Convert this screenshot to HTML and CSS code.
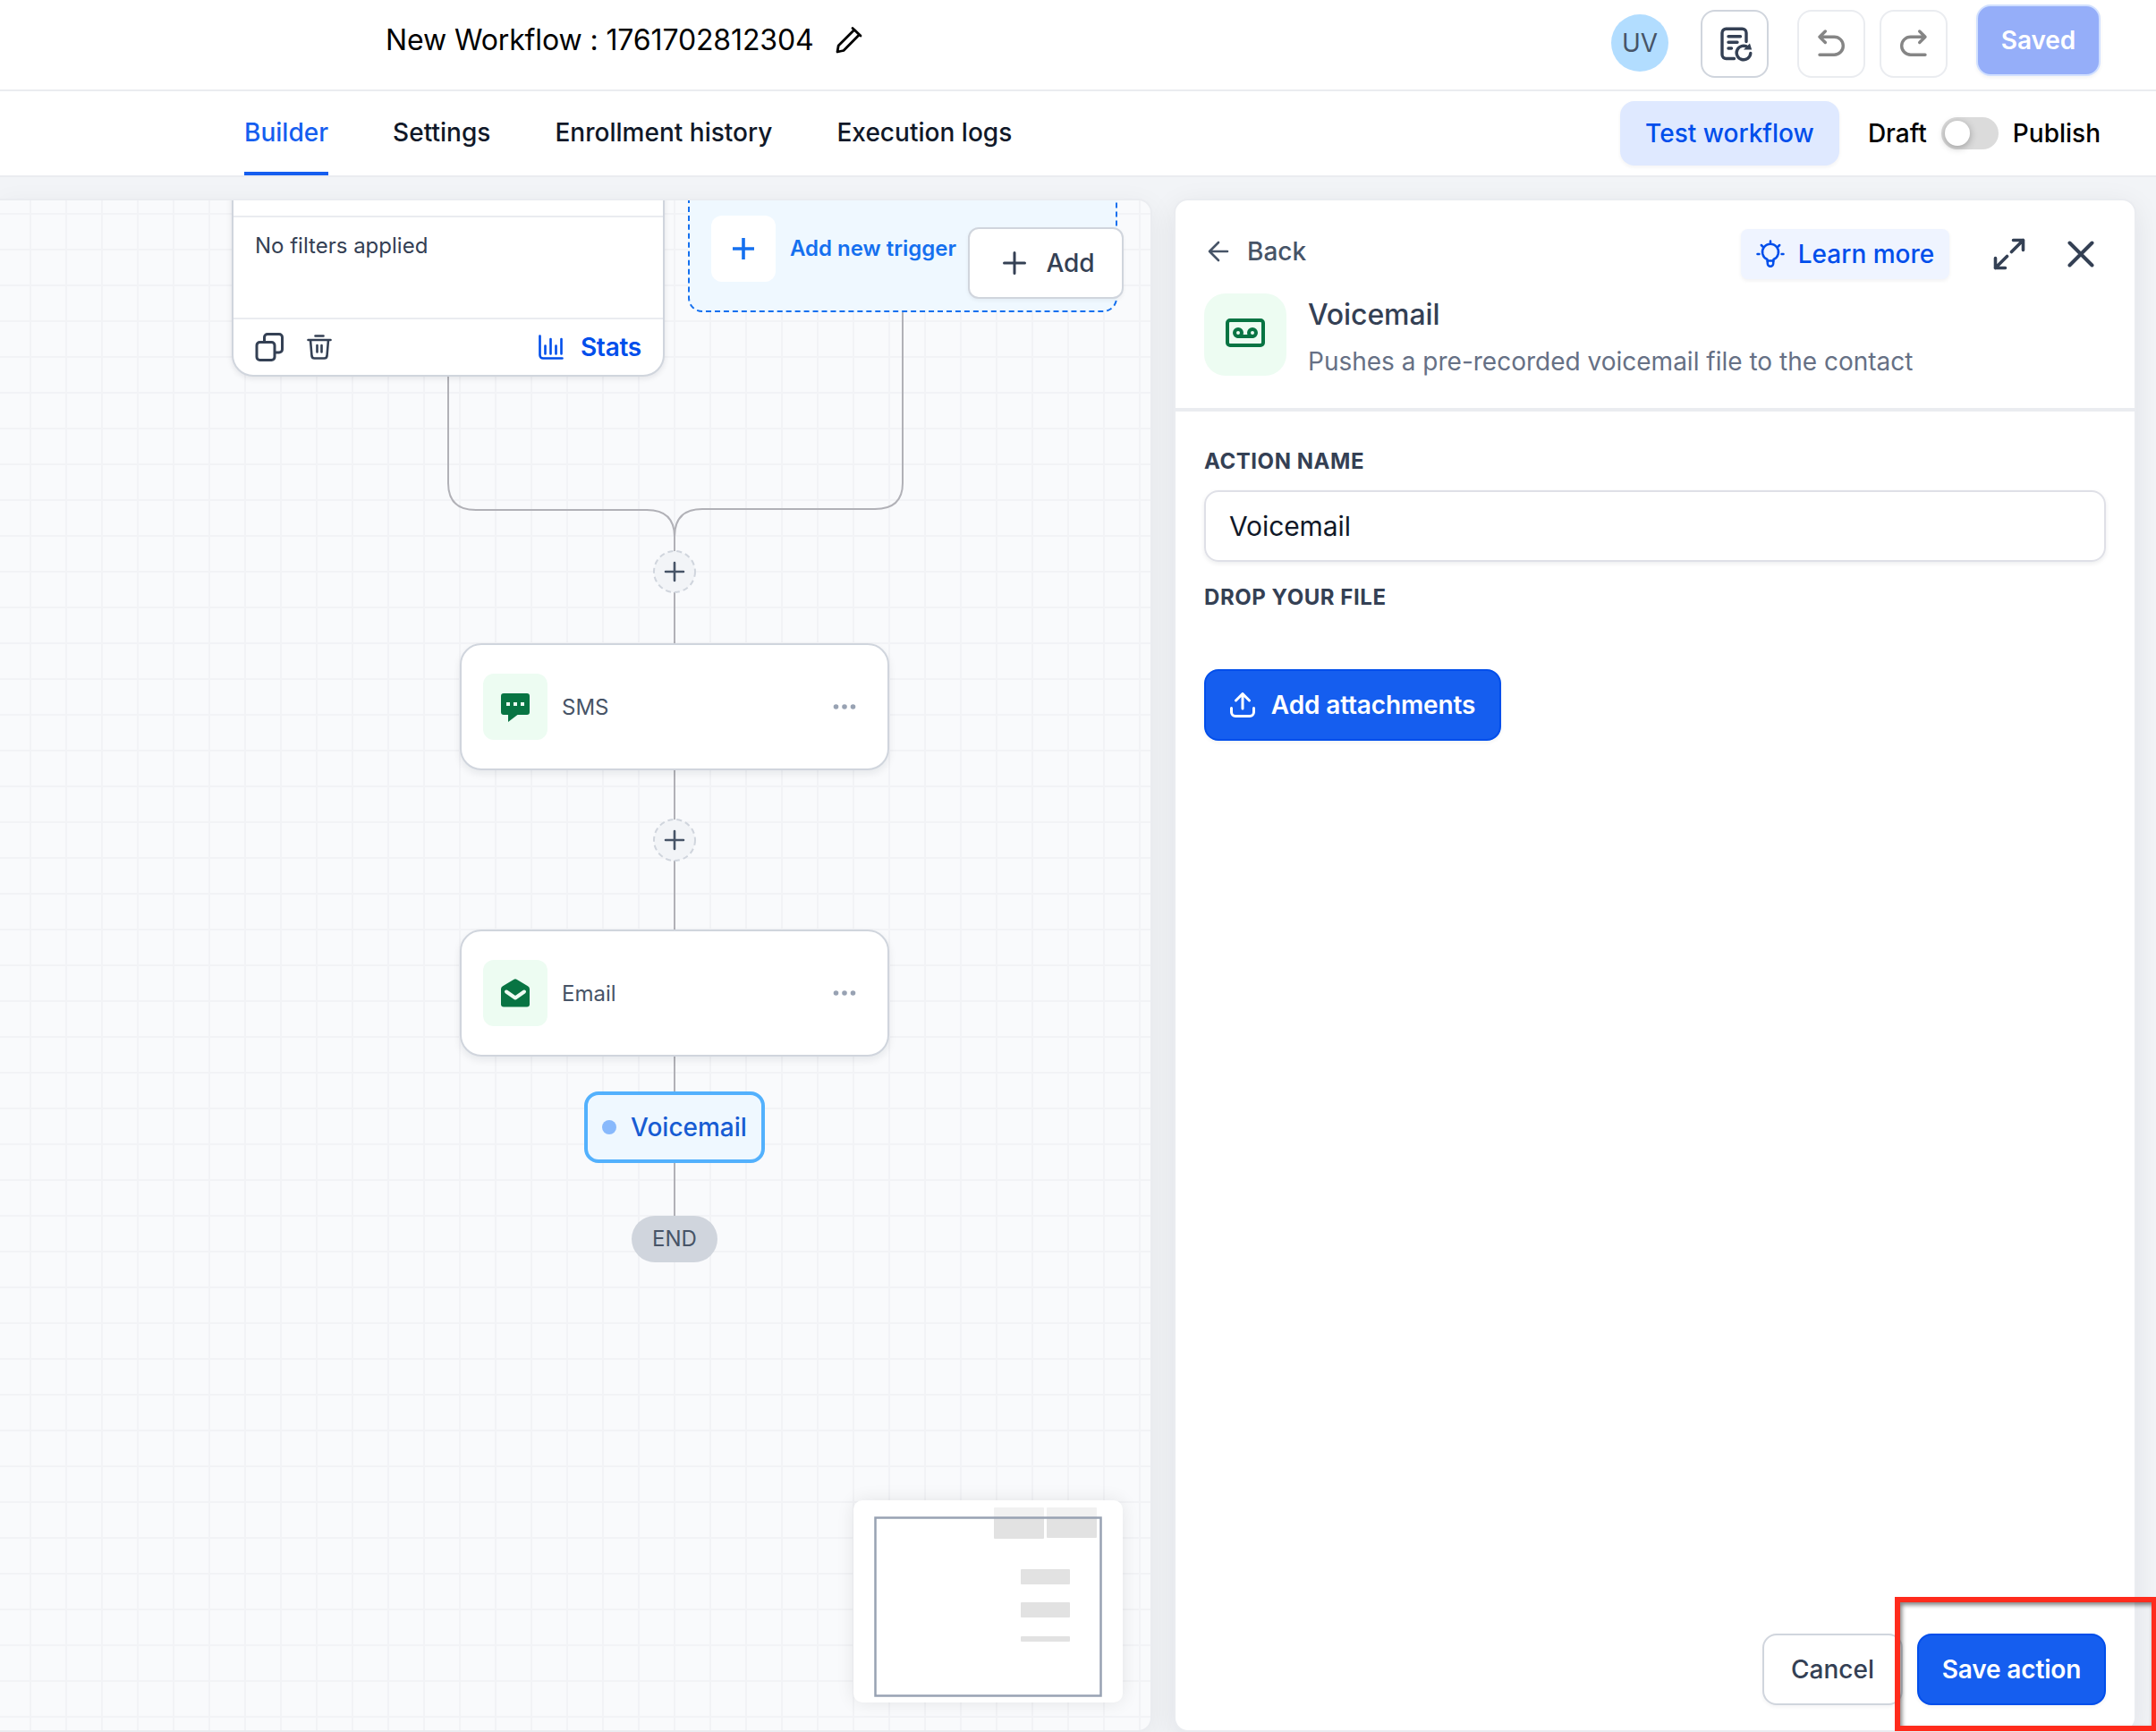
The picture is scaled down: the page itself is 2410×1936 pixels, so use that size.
FILE: index.html
```html
<!DOCTYPE html>
<html lang="en">
<head>
<meta charset="utf-8">
<title>Workflow builder</title>
<link rel="stylesheet" href="styles.css">
</head>
<body>
<header class="topbar">
  <div class="title">New Workflow : 1761702812304</div>
  <svg class="pencil" width="32" height="32" viewBox="0 0 32 32"><path d="M3 29l1.200-7L22 4.300l5.500 5.500L10 27.500zM20 2.500l9 8.500" /></svg>
  <div class="top-actions">
    <div class="avatar">UV</div>
    <button class="icon-btn strong"><svg width="40" height="42" viewBox="0 0 40 42"><path d="M19.500 37.500H10.500A4.500 4.500 0 0 1 6 33V8.700a4.500 4.500 0 0 1 4.500-4.500h18A4.500 4.500 0 0 1 33 8.700V18.500M13 12.700h13.500M13 19.300h10M13 26h3.500M37.800 31.500A7.800 7.800 0 1 1 35 25"/><path class="head" d="M37 20.500l2.200 7H30z"/></svg></button>
    <button class="icon-btn undo"><svg width="32" height="34" viewBox="0 0 32 34"><path d="M9.300 4L3 10.200l6.300 6.300M3 10.200H19.300a10 10 0 0 1 0 20H3"/></svg></button>
    <button class="icon-btn redo"><svg width="32" height="34" viewBox="0 0 32 34"><path d="M22.700 4L29 10.200l-6.300 6.300M29 10.200H12.700a10 10 0 0 0 0 20H29"/></svg></button>
    <button class="saved">Saved</button>
  </div>
</header>
<nav class="tabbar">
  <div class="tabs">
    <a class="tab active">Builder</a><a class="tab">Settings</a><a class="tab">Enrollment history</a><a class="tab">Execution logs</a>
  </div>
  <div class="publish">
    <button class="test">Test workflow</button>
    <span class="draft">Draft</span>
    <span class="toggle"><i></i></span>
    <span>Publish</span>
  </div>
</nav>
<main class="workspace">
  <section class="canvas">
    <svg class="edges" width="1286" height="1710" viewBox="0 224 1286 1710">
      <path d="M501 421V540Q501 570 532 570H723Q754 570 754 600M1009 349V540Q1009 569 978 569H785Q754 569 754 600M754 598V1360"/>
    </svg>

    <article class="trigger">
      <div class="filters">No filters applied</div>
      <footer class="trigger-foot">
        <svg width="32" height="32" viewBox="0 0 32 32"><rect x="2" y="10.500" width="20" height="20" rx="3.500"/><path d="M10.500 10V5a3.500 3.500 0 0 1 3.500-3.500h13A3.500 3.500 0 0 1 30.500 5v13.500A3.500 3.500 0 0 1 27 22h-4.500"/></svg>
        <svg class="trash" width="28" height="28" viewBox="0 0 28 28"><path d="M1.500 6h25M9.500 1.500h9M4 6l1.500 18a3 3 0 0 0 3 2.500h11a3 3 0 0 0 3-2.500L24 6M11.500 12v7.500M16.500 12v7.500"/></svg>
        <svg class="chart" width="28" height="28" viewBox="0 0 28 28"><path d="M1.500 1.500V23a3.500 3.500 0 0 0 3.500 3.500h21.500M7.500 12.500v9M13.500 5v16.500M19.500 12.500v9M25.500 5v16.500"/></svg>
        <span>Stats</span>
      </footer>
    </article>

    <article class="new-trigger">
      <span class="plus-tile"><svg width="24" height="24" viewBox="0 0 24 24"><path d="M12 0v24M0 12h24"/></svg></span>
      <span>Add new trigger</span>
    </article>
    <button class="add-btn"><svg width="26" height="26" viewBox="0 0 26 26"><path d="M13 1.500v23M1.500 13h23"/></svg>Add</button>

    <span class="step-plus p1"><svg width="48" height="48" viewBox="0 0 48 48"><circle cx="24" cy="24" r="23"/><path d="M24 14v20M14 24h20"/></svg></span>
    <article class="node sms">
      <span class="tile"><svg width="32" height="32" viewBox="0 0 32 32"><path fill-rule="evenodd" d="M3 0h26a3 3 0 0 1 3 3v18a3 3 0 0 1-3 3H18.500L8 32v-8H3a3 3 0 0 1-3-3V3a3 3 0 0 1 3-3zM6 10v4h4v-4zM14 10v4h4v-4zM22 10v4h4v-4z"/></svg></span>
      <span class="label">SMS</span>
      <svg class="dots" width="26" height="8" viewBox="0 0 26 8"><circle cx="3.500" cy="4" r="2.800"/><circle cx="13" cy="4" r="2.800"/><circle cx="22.500" cy="4" r="2.800"/></svg>
    </article>
    <span class="step-plus p2"><svg width="48" height="48" viewBox="0 0 48 48"><circle cx="24" cy="24" r="23"/><path d="M24 14v20M14 24h20"/></svg></span>
    <article class="node email">
      <span class="tile"><svg width="32" height="32" viewBox="0 0 32 32"><path d="M14.500.8a3 3 0 0 1 3 0L30 8.200A4 4 0 0 1 32 11.500V28.500a3 3 0 0 1-3 3H3a3 3 0 0 1-3-3V11.500A4 4 0 0 1 2 8.200z"/><path class="flap" d="M6 14.500l10 7 10-7"/></svg></span>
      <span class="label">Email</span>
      <svg class="dots" width="26" height="8" viewBox="0 0 26 8"><circle cx="3.500" cy="4" r="2.800"/><circle cx="13" cy="4" r="2.800"/><circle cx="22.500" cy="4" r="2.800"/></svg>
    </article>
    <div class="chip"><i></i>Voicemail</div>
    <div class="end">END</div>

    <aside class="minimap">
      <svg width="301" height="226" viewBox="954 1677 301 226">
        <g fill="#e2e2e2"><rect x="1111" y="1685" width="56" height="35" rx="1"/><rect x="1170" y="1685" width="56" height="34" rx="1"/><rect x="1141" y="1754" width="55" height="17" rx="1"/><rect x="1141" y="1791" width="55" height="17" rx="1"/><rect x="1141" y="1829" width="55" height="6" rx="1"/></g>
        <rect x="1100" y="1680" width="130" height="16" fill="#fff" opacity=".5"/>
        <rect x="978.500" y="1696.500" width="252" height="199" fill="none" stroke="#98a2b3" stroke-width="2.500"/>
      </svg>
    </aside>
  </section>

  <section class="panel">
    <header class="panel-head">
      <div class="panel-nav">
        <a class="back"><svg width="24" height="24" viewBox="0 0 24 24"><path d="M22 12H2M12 2L2 12l10 10"/></svg>Back</a>
        <div class="panel-tools">
          <button class="learn"><svg width="32" height="32" viewBox="0 0 32 32"><path d="M12.500 24.500v-2.500a9 9 0 1 1 7 0v2.500M12.500 23.500h7M12.800 24v2.500a3.200 3.200 0 0 0 6.400 0V24M16 1.500v2M5.800 6l1.500 1.500M26.200 6l-1.500 1.500M1.500 16h2M28.500 16h2"/></svg>Learn more</button>
          <svg class="expand" width="36" height="36" viewBox="0 0 36 36"><path d="M20.500 15.500L33.500 2.500M22.500 2.500h11v11M15.500 20.500L2.500 33.500M2.500 22.500v11h11"/></svg>
          <svg class="close" width="30" height="30" viewBox="0 0 30 30"><path d="M2.500 2.500l25 25M27.500 2.500l-25 25"/></svg>
        </div>
      </div>
      <div class="action-info">
        <span class="action-tile"><svg width="44" height="32" viewBox="0 0 44 32"><rect x="2" y="2" width="40" height="28" rx="3"/><circle cx="14" cy="16" r="4"/><circle cx="30" cy="16" r="4"/><path d="M14 20h16"/></svg></span>
        <div><h1>Voicemail</h1><p>Pushes a pre-recorded voicemail file to the contact</p></div>
      </div>
    </header>
    <form class="form">
      <label>ACTION NAME</label>
      <div class="input">Voicemail</div>
      <label>DROP YOUR FILE</label>
      <button class="primary attach"><svg width="28" height="28" viewBox="0 0 28 28"><path d="M1.500 17.500V22a4.500 4.500 0 0 0 4.500 4.500h16a4.500 4.500 0 0 0 4.500-4.500v-4.500M14 18V1.500M6.500 9L14 1.500 21.500 9"/></svg>Add attachments</button>
    </form>
    <footer class="panel-foot"><button class="cancel">Cancel</button><button class="primary save">Save action</button></footer>
  </section>
</main>
<div class="highlight"></div>
</body>
</html>
```
FILE: styles.css
```css
* { box-sizing: border-box; }
html, body { margin: 0; width: 2410px; height: 1936px; overflow: hidden; }
body { position: relative; display: flex; flex-direction: column; background: #f2f4f7; font-family: Inter, "Liberation Sans", sans-serif; font-size: 28px; color: #000; }
button { font: inherit; margin: 0; padding: 0; display: flex; align-items: center; justify-content: center; white-space: nowrap; }
svg { display: block; flex: none; fill: none; stroke: currentColor; stroke-width: 3; stroke-linecap: round; stroke-linejoin: round; }

/* Top bar */
.topbar { flex: none; height: 102px; background: #fff; border-bottom: 2px solid #eaecf0; display: flex; align-items: flex-start; padding-left: 431px; padding-right: 62px; }
.title { font-size: 32px; line-height: 40px; margin-top: 25px; white-space: nowrap; width: 478px; letter-spacing: -.12px; }
.pencil { margin: 29px 0 0 24px; stroke-width: 2.800; }
.top-actions { display: flex; align-items: flex-start; margin-left: auto; }
.avatar { width: 64px; height: 64px; margin: 16px 36px 0 0; border-radius: 50%; background: #b2ddff; color: #475467; line-height: 64px; text-align: center; }
.icon-btn { width: 76px; height: 76px; margin-top: 11px; background: #fff; border: 2px solid #eaecf0; border-radius: 16px; color: #858585; }
.icon-btn svg { stroke-width: 3.400; }
.icon-btn.strong { border-color: #d0d5dd; color: #344054; margin-right: 32px; }
.icon-btn .head { fill: currentColor; stroke: none; }
.undo { margin-right: 16px; }
.redo { margin-right: 32px; }
.undo svg, .redo svg { margin-top: -3px; }
.saved { width: 139px; height: 80px; margin-top: 5px; border: 2px solid #d1e0ff; border-radius: 16px; background: #95aef9; color: #fff; font-weight: 600; letter-spacing: -.1px; box-shadow: 0 2px 4px rgba(16,24,40,.05); }

/* Tabs */
.tabbar { flex: none; height: 96px; background: #fff; border-bottom: 2px solid #eaecf0; display: flex; justify-content: space-between; padding: 0 62px 0 273px; font-weight: 500; }
.tabs { display: flex; gap: 72px; }
.tab { height: 94px; padding-top: 1px; line-height: 90px; border-bottom: 4px solid transparent; color: #101828; white-space: nowrap; letter-spacing: .02px; }
.tab.active { color: #155eef; border-image: linear-gradient(#155eef, #155eef) 1; }
.publish { display: flex; align-items: center; }
.test { width: 245px; height: 72px; margin-right: 32px; border: 0; border-radius: 16px; background: #dfe9ff; color: #004eeb; font-weight: 500; box-shadow: 0 2px 4px rgba(16,24,40,.05); }
.toggle { width: 64px; height: 36px; margin: 0 16px; padding: 4px; border-radius: 18px; background: #dbdbdb; }
.toggle i { display: block; width: 28px; height: 28px; border-radius: 50%; background: #fff; box-shadow: 0 2px 8px rgba(0,0,0,.3); }

/* Workspace */
.workspace { flex: none; display: flex; gap: 24px; height: 1738px; padding-top: 24px; }
.canvas { position: relative; width: 1288px; height: 1714px; overflow: hidden; border: 2px solid #eaecf0; border-left: 0; border-radius: 0 16px 16px 0; box-shadow: 0 8px 32px rgba(16,24,40,.06); background: linear-gradient(90deg, #f2f3f6 2px, transparent 2px) 33px 0 / 40px 40px, linear-gradient(#f2f3f6 2px, transparent 2px) 0 14px / 40px 40px, #f9fafc; }
.canvas > * { position: absolute; }
.edges { left: 0; top: 0; stroke: #b1b1b7; stroke-width: 2; stroke-linecap: butt; }

.trigger { left: 259px; top: -80px; width: 484px; height: 277px; padding-top: 95px; background: #fff; border: 2px solid #d0d5dd; border-radius: 24px; box-shadow: 0 2px 6px rgba(16,24,40,.1); }
.filters { height: 116px; padding: 14px 24px; border: solid #eaecf0; border-width: 2px 0; font-size: 24px; line-height: 36px; color: #344054; }
.trigger-foot { display: flex; align-items: center; height: 62px; padding: 0 24px 0 24px; color: #344054; }
.trash { margin-left: 26px; stroke-width: 2.600; }
.chart { margin-left: auto; margin-right: 19px; color: #004eeb; stroke-width: 2.600; }
.trigger-foot span { color: #004eeb; font-weight: 600; letter-spacing: -.25px; }

.new-trigger { left: 769px; top: -60px; width: 480px; height: 185px; padding: 75px 0 0 24px; display: flex; align-items: flex-start; gap: 16px; background: #eff8ff; border: 2px dashed #1570ef; border-radius: 16px; color: #1570ef; font-size: 24px; font-weight: 600; line-height: 74px; }
.plus-tile { width: 72px; height: 74px; display: flex; align-items: center; justify-content: center; background: #fff; border-radius: 12px; }
.plus-tile svg { stroke-width: 3.600; stroke-linecap: butt; }
.add-btn { left: 1082px; top: 30px; width: 174px; height: 80px; gap: 22px; background: #fff; border: 2px solid #d0d5dd; border-radius: 12px; color: #344054; font-weight: 500; box-shadow: 0 2px 4px rgba(16,24,40,.05); padding-left: 7px; }

.step-plus { left: 730px; width: 48px; height: 48px; color: #475467; }
.step-plus circle { fill: #f2f4f7; stroke: #d0d5dd; stroke-width: 2; stroke-dasharray: 6 4; stroke-linecap: butt; }
.step-plus path { stroke-width: 2.600; }
.p1 { top: 391px; }
.p2 { top: 691px; }
.node { left: 514px; width: 480px; height: 142px; display: flex; align-items: center; padding: 0 35px 0 24px; background: #fff; border: 2px solid #d0d5dd; border-radius: 24px; box-shadow: 0 4px 8px rgba(16,24,40,.08); font-size: 24px; color: #475467; }
.sms { top: 495px; }
.email { top: 815px; }
.tile { width: 72px; height: 74px; display: flex; align-items: center; justify-content: center; background: #edfcf2; border-radius: 12px; color: #087443; margin-right: 16px; }
.tile svg { fill: currentColor; stroke: none; }
.sms .tile svg { margin-top: 2px; }
.tile .flap { fill: none; stroke: #edfcf2; stroke-width: 4; }
.dots { fill: #98a2b3; stroke: none; margin-left: auto; }
.chip { left: 653px; top: 996px; width: 202px; height: 80px; display: flex; align-items: center; justify-content: center; gap: 16px; background: #eff8ff; border: 4px solid #53b1fd; border-radius: 16px; color: #175cd3; font-weight: 500; }
.chip i { width: 16px; height: 16px; border-radius: 50%; background: #88b9fc; }
.end { left: 706px; top: 1135px; width: 96px; height: 52px; border-radius: 26px; background: #d0d5dd; color: #475467; font-size: 24px; line-height: 52px; text-align: center; }
.minimap { left: 954px; top: 1453px; width: 301px; height: 226px; background: #fff; border-radius: 10px; box-shadow: 0 0 20px rgba(0,0,0,.09); }
.minimap rect { stroke-linejoin: miter; }
.minimap g rect { stroke: none; }
.minimap svg > rect:first-of-type { stroke: none; }

/* Action panel */
.panel { width: 1076px; height: 1714px; display: flex; flex-direction: column; background: #fff; border: 2px solid #eaecf0; border-radius: 16px; box-shadow: 0 8px 32px rgba(16,24,40,.08); }
.panel-head { height: 236px; border-bottom: 4px solid #eaecf0; padding: 32px 32px 0; }
.panel-nav { display: flex; justify-content: space-between; height: 56px; }
.back { display: flex; align-items: center; gap: 20px; height: 50px; padding-left: 4px; color: #475467; font-weight: 500; }
.back svg { stroke-width: 2.600; }
.panel-tools { display: flex; align-items: center; color: #344054; }
.learn { width: 233px; height: 56px; gap: 15px; border: 0; border-radius: 8px; background: #eff4ff; color: #004eeb; font-weight: 500; box-shadow: 0 2px 4px rgba(16,24,40,.06); }
.learn svg { stroke-width: 2.500; }
.expand { margin: 0 47px 0 49px; stroke-width: 3.600; }
.close { margin-right: 13px; stroke-width: 4; }
.action-info { display: flex; gap: 24px; margin-top: 16px; }
.action-tile { width: 92px; height: 92px; display: flex; align-items: center; justify-content: center; background: #edfcf2; border-radius: 24px; color: #087443; padding-bottom: 4px; }
.action-tile svg { stroke-width: 4; }
h1 { margin: 1px 0 0; font-size: 32px; line-height: 46px; font-weight: 500; letter-spacing: -.1px; color: #344054; }
p { margin: 6px 0 0; line-height: 46px; color: #667085; white-space: nowrap; }

.form { padding: 37px 32px 0; flex: 1; }
.form label { display: block; height: 38px; line-height: 38px; font-size: 24px; font-weight: 700; letter-spacing: .55px; color: #344054; }
.input { height: 80px; margin: 13px 0 21px; padding: 0 26px; line-height: 76px; border: 2px solid #dfe0e7; border-radius: 16px; font-size: 30px; letter-spacing: -.1px; color: #101828; box-shadow: 0 2px 5px rgba(16,24,40,.08); }
.primary { height: 80px; background: #155eef; border: 2px solid #004eeb; border-radius: 16px; color: #fff; font-weight: 600; letter-spacing: -.15px; box-shadow: 0 2px 4px rgba(16,24,40,.05); }
.attach { width: 332px; gap: 18px; margin-top: 61px; }
.panel-foot { display: flex; justify-content: flex-end; gap: 16px; padding: 0 32px 28px; }
.cancel { width: 157px; height: 80px; background: #fff; border: 2px solid #d0d5dd; border-radius: 16px; color: #344054; font-weight: 500; box-shadow: 0 2px 4px rgba(16,24,40,.05); }
.save { width: 211px; }

/* Callout frame over the save button */
.highlight { position: absolute; left: 2118px; top: 1785px; width: 293px; height: 150px; border: 6px solid #ff2b1c; box-shadow: inset 2px 3px 5px rgba(0,0,0,.5); }
```
